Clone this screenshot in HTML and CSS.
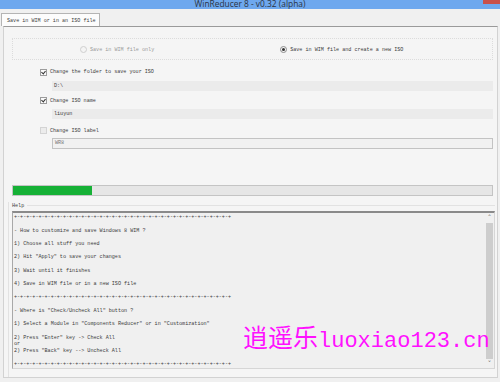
FILE: index.html
```html
<!DOCTYPE html>
<html lang="en">
<head>
    <meta charset="UTF-8">
    <title>WinReducer 8 - v0.32 (alpha)</title>
    <link rel="stylesheet" href="styles.css">
</head>
<body>
    <div class="titlebar">
        <span class="title">WinReducer 8 - v0.32 (alpha)</span>
        <span class="close"></span>
    </div>

    <div class="tabstrip">
        <div class="tab">Save in WIM or in an ISO file</div>
    </div>

    <div class="panel">
        <div class="radio-box">
            <label class="radio disabled"><span class="dot"></span>Save in WIM file only</label>
            <label class="radio checked"><span class="dot"></span>Save in WIM file and create a new ISO</label>
        </div>

        <label class="check checked row1"><span class="box"></span>Change the folder to save your ISO</label>
        <div class="field f1">D:\</div>

        <label class="check checked row2"><span class="box"></span>Change ISO name</label>
        <div class="field f2">liuyun</div>

        <label class="check disabled row3"><span class="box"></span>Change ISO label</label>
        <div class="field f3 framed">WR8</div>

        <div class="progress"><div class="progress-fill" style="width: 79px"></div></div>

        <div class="help">
            <div class="help-head"><span class="legend">Help</span><span class="rule"></span></div>
            <div class="textarea">
                <pre class="help-text">+-+-+-+-+-+-+-+-+-+-+-+-+-+-+-+-+-+-+-+-+-+-+-+-+-+-+-+-+-+-+-+-+-+-+-+

- How to customize and save Windows 8 WIM ?

1) Choose all stuff you need

2) Hit "Apply" to save your changes

3) Wait until it finishes

4) Save in WIM file or in a new ISO file

+-+-+-+-+-+-+-+-+-+-+-+-+-+-+-+-+-+-+-+-+-+-+-+-+-+-+-+-+-+-+-+-+-+-+-+

- Where is "Check/Uncheck All" button ?

1) Select a Module in "Components Reducer" or in "Customization"

2) Press "Enter" key -> Check All
or
2) Press "Back" key --> Uncheck All

+-+-+-+-+-+-+-+-+-+-+-+-+-+-+-+-+-+-+-+-+-+-+-+-+-+-+-+-+-+-+-+-+-+-+-+</pre>
                <div class="scrollbar">
                    <span class="arrow">&#708;</span>
                    <span class="thumb"></span>
                    <span class="arrow">&#709;</span>
                </div>
            </div>
        </div>
    </div>

    <div class="watermark"><span class="cjk">逍遥乐</span><span class="latin">luoxiao123.cn</span></div>
</body>
</html>
```

FILE: styles.css
```css
* {
    box-sizing: border-box;
    margin: 0;
    padding: 0;
}
body {
    width: 500px;
    height: 382px;
    overflow: hidden;
    background-color: #f0f0f0;
    font-family: 'Liberation Mono', monospace;
    font-size: 5.1px;
    color: #3c3c3c;
    position: relative;
}
.titlebar {
    height: 9px;
    background-color: #6ea8ee;
    display: flex;
    justify-content: center;
    align-items: flex-end;
    overflow: hidden;
    position: relative;
}
.title {
    font-family: 'Open Sans', sans-serif;
    font-size: 8.4px;
    line-height: 10px;
    color: #2a3342;
}
.close {
    position: absolute;
    right: 0;
    top: 0;
    width: 17px;
    height: 4px;
    background-color: #c9504a;
}
.tabstrip {
    height: 17px;
    padding-left: 1px;
    display: flex;
    align-items: flex-end;
}
.tab {
    height: 13px;
    width: 99px;
    border: 1px solid #b4b4b4;
    border-bottom: none;
    background-color: #fcfcfc;
    padding: 4px 0 0 5px;
}
.panel {
    margin: 0 2px 0 3px;
    height: 352px;
    border: 1px solid #d2d2d2;
    border-top-color: #9a9a9a;
    background-color: #f5f5f5;
    display: flex;
    flex-direction: column;
}
.radio-box {
    margin: 11px 0 0 8px;
    width: 481px;
    height: 23px;
    border: 1px dotted #dcdcdc;
    display: flex;
    align-items: center;
    padding: 1px 0 0 67px;
    gap: 126px;
}
.radio, .check {
    display: flex;
    align-items: center;
    gap: 3px;
    height: 8px;
}
.dot {
    width: 7px;
    height: 7px;
    border-radius: 50%;
    border: 1px solid #8d8d8d;
    background-color: #f4f4f4;
    display: flex;
    align-items: center;
    justify-content: center;
}
.radio.disabled {
    color: #9a9a9a;
}
.radio.disabled .dot {
    border-color: #cfcfcf;
}
.radio.checked .dot::after {
    content: "";
    width: 3px;
    height: 3px;
    border-radius: 50%;
    background-color: #333;
}
.check {
    margin-left: 36px;
}
.box {
    width: 7px;
    height: 7px;
    border: 1px solid #9c9c9c;
    background-color: #fafafa;
    position: relative;
}
.check.checked .box::after {
    content: "";
    position: absolute;
    left: 1px;
    top: 0;
    width: 2px;
    height: 3px;
    border: solid #333;
    border-width: 0 1px 1px 0;
    transform: rotate(40deg);
}
.check.disabled .box {
    border-color: #d4d4d4;
    background-color: #ececec;
}
.row1 { margin-top: 8px; }
.row2 { margin-top: 6px; }
.row3 { margin-top: 8px; }
.field {
    margin-left: 48px;
    width: 441px;
    height: 10px;
    background-color: #ebebeb;
    padding-left: 2px;
    line-height: 10px;
}
.f1 { margin-top: 5px; }
.f2 { margin-top: 4px; }
.f3 { margin-top: 3px; height: 11px; }
.field.framed {
    background-color: #f1f1f1;
    border: 1px solid #c3c3c3;
    line-height: 9px;
    color: #777;
}
.progress {
    margin: 36px 0 0 8px;
    width: 481px;
    height: 12px;
    border: 1px solid #c4c4c4;
    background-color: #e6e6e6;
}
.progress-fill {
    height: 100%;
    background-color: #16b136;
}
.help {
    margin: 6px 0 0 4px;
    flex: 1;
    display: flex;
    flex-direction: column;
    border-left: 1px solid #e2e2e2;
    padding: 0 2px 8px 3px;
}
.help-head {
    display: flex;
    align-items: center;
    height: 7px;
}
.legend {
    padding-right: 3px;
}
.rule {
    flex: 1;
    height: 1px;
    background-color: #e2e2e2;
}
.textarea {
    margin-top: 2px;
    flex: 1;
    display: flex;
    overflow: hidden;
    border: 1px solid #d6d6d6;
    border-top: 2px solid #8a8a8a;
    border-left-color: #a8a8a8;
    background-color: #f0f0f0;
}
.help-text {
    flex: 1;
    font-family: 'Liberation Mono', monospace;
    font-size: 5.1px;
    line-height: 6.68px;
    margin-top: 1px;
    padding-left: 1px;
    white-space: pre;
    overflow: hidden;
}
.scrollbar {
    width: 9px;
    display: flex;
    flex-direction: column;
    align-items: center;
    padding: 2px 0 1px;
    gap: 2px;
}
.arrow {
    font-family: 'DejaVu Sans', sans-serif;
    font-size: 7px;
    line-height: 6px;
    color: #606060;
}
.thumb {
    flex: 1;
    width: 7px;
    background-color: #cdcdcd;
}
.watermark {
    position: absolute;
    left: 243px;
    top: 318px;
    color: #ff10ff;
    display: flex;
    align-items: baseline;
}
.cjk {
    font-family: 'Noto Sans CJK SC', sans-serif;
    font-size: 25px;
}
.latin {
    font-family: 'Liberation Mono', monospace;
    font-size: 22px;
}
```
